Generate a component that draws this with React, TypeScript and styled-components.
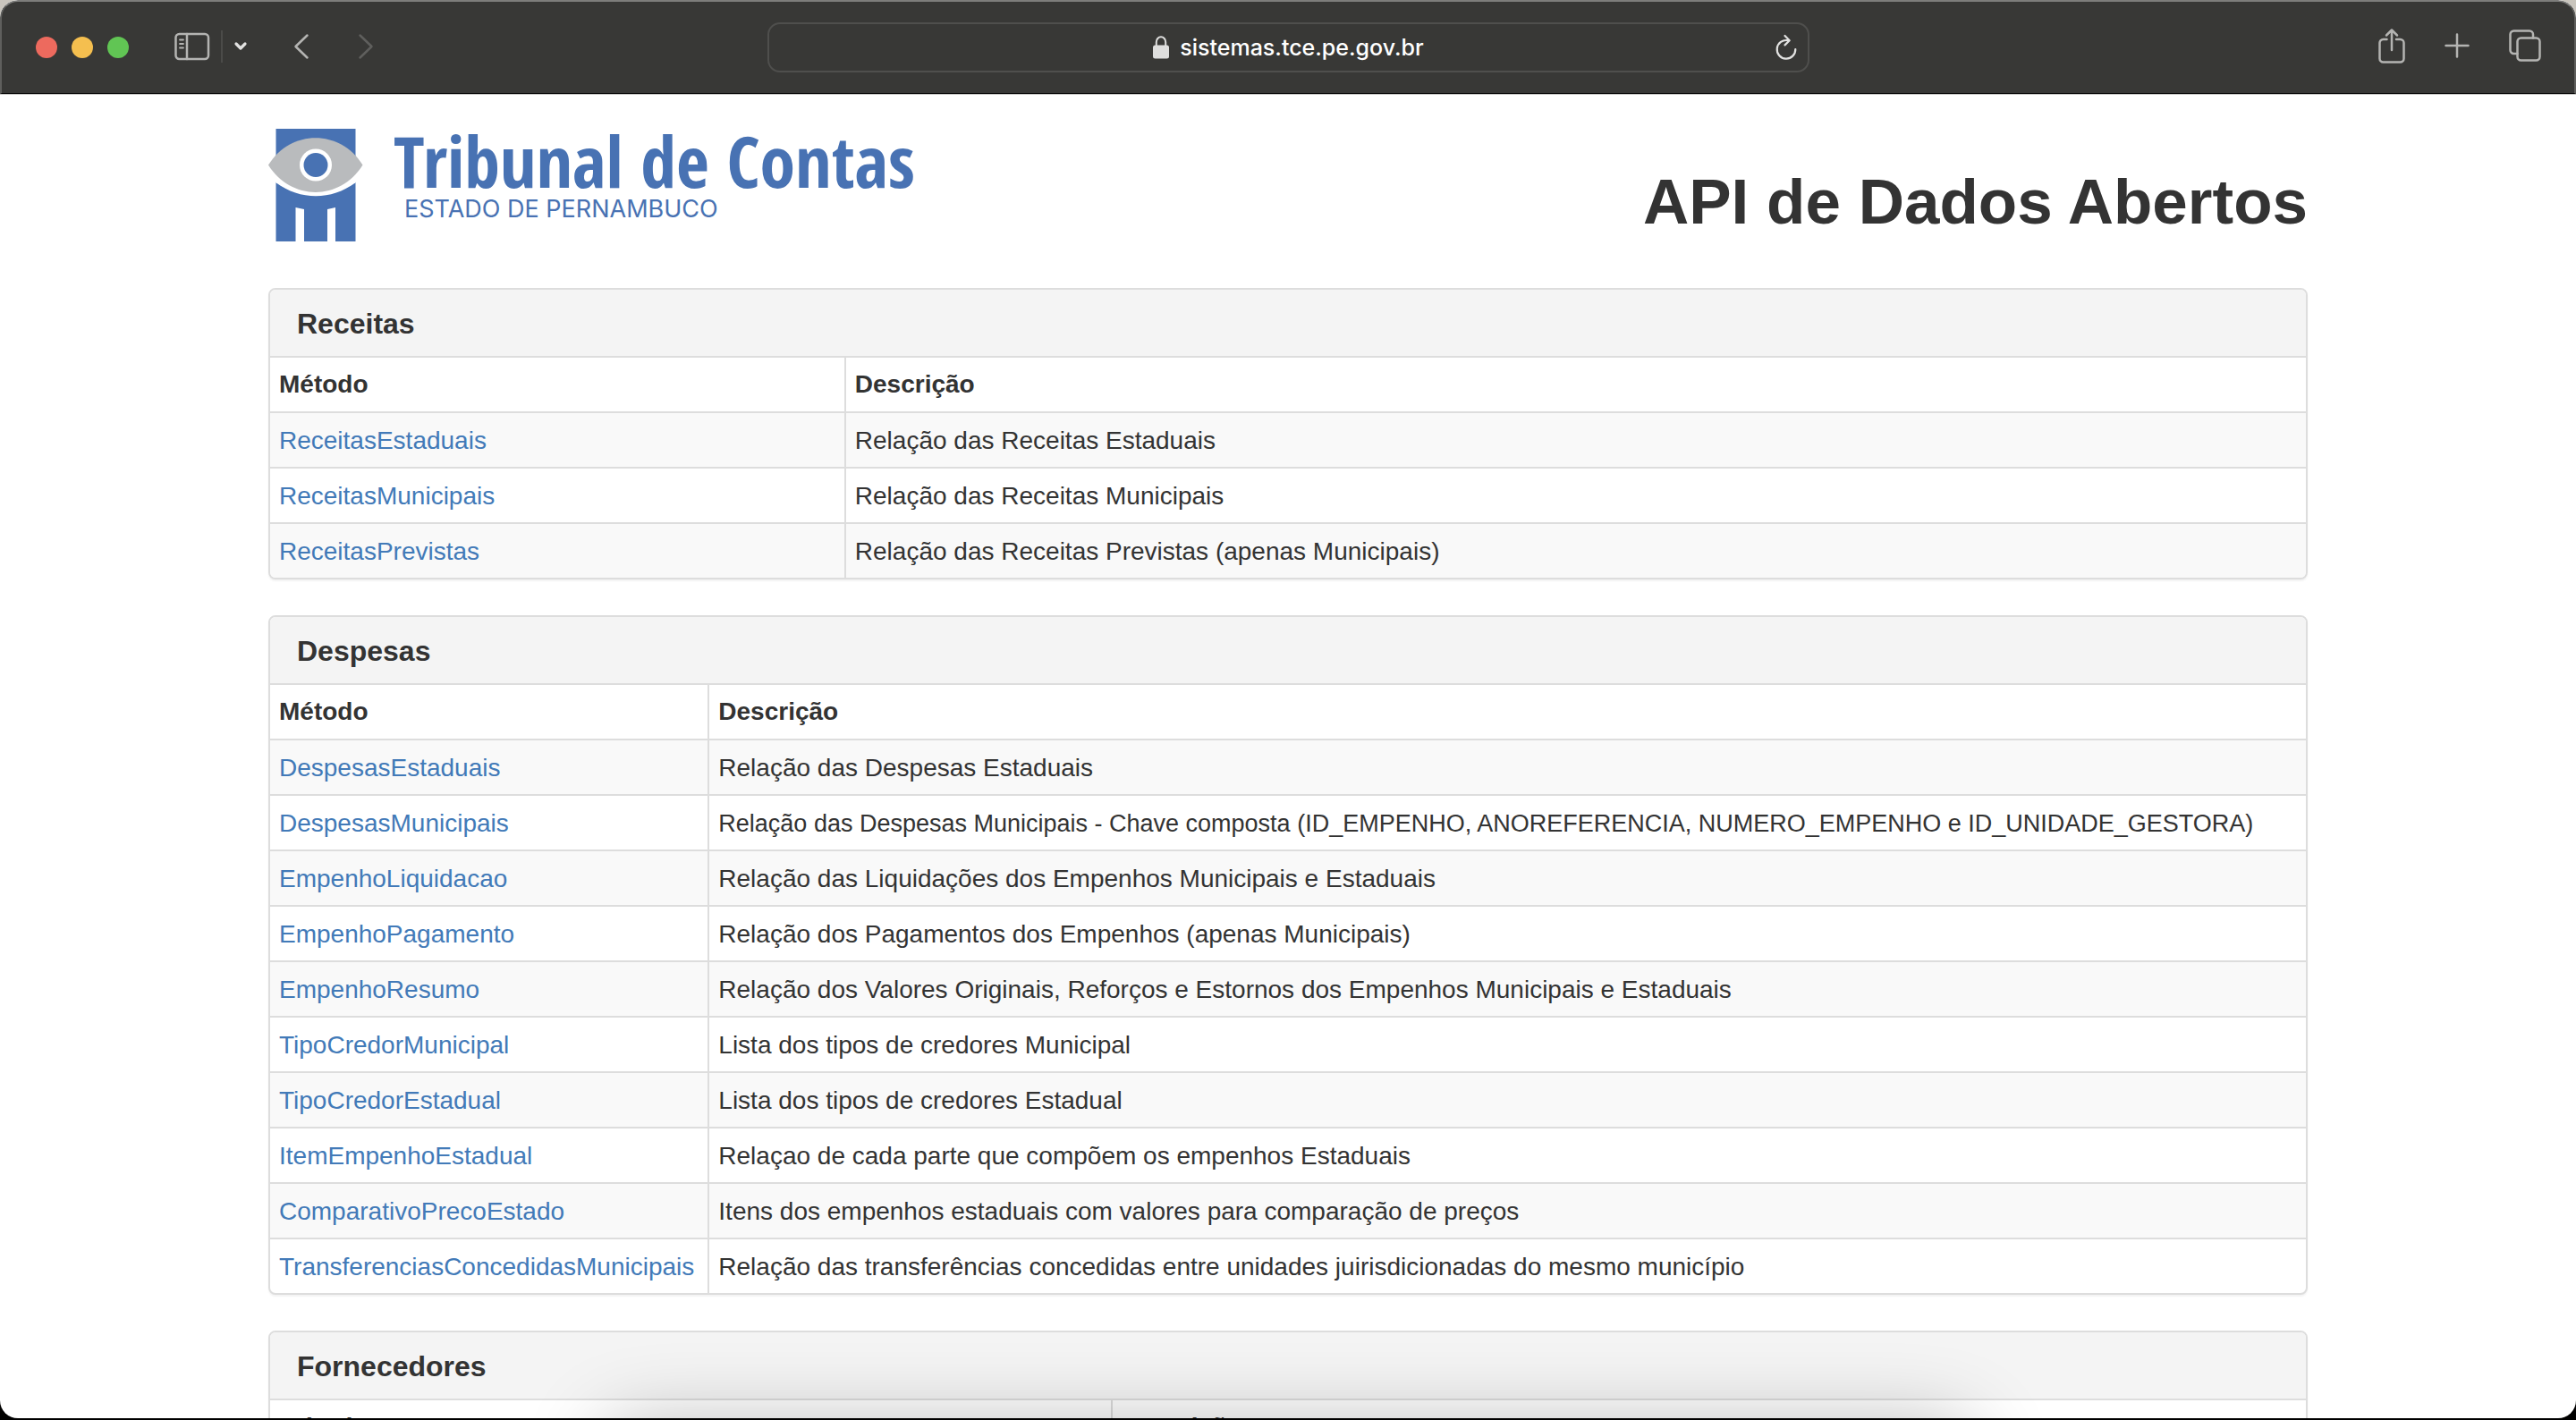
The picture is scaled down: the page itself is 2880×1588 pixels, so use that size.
import React from "react";
import styled, { createGlobalStyle } from "styled-components";

const GlobalStyle = createGlobalStyle`
  *, *::before, *::after { box-sizing: border-box; }
  body { margin: 0; background: #1a1710; }
`;

const sans = `"Liberation Sans", Arial, Helvetica, sans-serif`;

/* ---------- browser window ---------- */

const Desktop = styled.div`
  height: 100vh;
  padding-bottom: 2px;
  background: linear-gradient(#c9c5bd 0, #c9c5bd 60px, #3a3118 70%, #000 100%);
  overflow: hidden;
`;

const BrowserWindow = styled.div`
  position: relative;
  display: flex;
  flex-direction: column;
  height: 100%;
  border-radius: 20px;
  overflow: hidden;
  background: #fff;
`;

const Toolbar = styled.header`
  flex: none;
  display: grid;
  grid-template-columns: 1fr 41.6% 1fr;
  align-items: center;
  height: 105px;
  padding: 0 37px 1px 38px;
  border: 2px solid #5f5f5d;
  border-top-color: #7d7d7b;
  border-bottom: 1px solid #000;
  border-radius: 20px 20px 0 0;
  background: #383836;
  box-shadow: 0 1px 0 #c4c4c2;
`;

const Group = styled.div<{ $gap: number; $end?: boolean }>`
  display: flex;
  align-items: center;
  justify-content: ${(p) => (p.$end ? "flex-end" : "flex-start")};
  gap: ${(p) => p.$gap}px;
`;

const IconGroup = styled(Group)`
  padding-bottom: ${(p) => (p.$end ? 4 : 2)}px;
`;

const LeftTools = styled.div`
  display: flex;
  align-items: center;
  gap: 51px;
`;

const TrafficLight = styled.button<{ $color: string }>`
  width: 24px;
  height: 24px;
  padding: 0;
  border: 0;
  border-radius: 50%;
  background: ${(p) => p.$color};
`;

const ToolButton = styled.button<{ $dim?: boolean; $bright?: boolean }>`
  display: flex;
  padding: 0;
  border: 0;
  background: none;
  color: ${(p) => (p.$dim ? "#5f5f5d" : p.$bright ? "#e2e2e1" : "#b4b4b2")};
  svg {
    display: block;
    fill: none;
    stroke: currentColor;
    stroke-width: 2.5;
    stroke-linecap: round;
    stroke-linejoin: round;
  }
`;

const Divider = styled.span`
  width: 2px;
  height: 36px;
  background: #4b4b49;
`;

const AddressBar = styled.div`
  display: grid;
  grid-template-columns: 1fr auto 1fr;
  align-items: center;
  height: 56px;
  padding: 0 11px;
  border: 2px solid #4f4f4d;
  border-radius: 14px;
`;

const Address = styled.label`
  grid-column: 2;
  display: flex;
  align-items: center;
  gap: 12px;
`;

const AddressInput = styled.input`
  field-sizing: content;
  padding: 0;
  border: 0;
  outline: 0;
  background: none;
  color: #fff;
  font: 500 25px/36px Inter, Roboto, sans-serif;
`;

const Reload = styled(ToolButton)`
  justify-self: end;
`;

/* ---------- page ---------- */

const Page = styled.div`
  flex: 1;
  min-height: 0;
  overflow: hidden;
  padding-top: 39px;
`;

const Container = styled.main`
  width: 100%;
  max-width: 2340px;
  margin: 0 auto;
  padding: 0 30px;
  color: #333;
  font: 28px/40px ${sans};
`;

const PageHeader = styled.div`
  display: flex;
  align-items: flex-end;
  justify-content: space-between;
  margin-bottom: 52px;
`;

const Logo = styled.a`
  display: flex;
  gap: 34px;
  color: #4872b3;
  text-decoration: none;
  svg {
    display: block;
  }
`;

const Wordmark = styled.span`
  display: flex;
  flex-direction: column;
`;

const LogoName = styled.span`
  font: 700 80px/70px "Open Sans Condensed", "Roboto Condensed", sans-serif;
`;

const LogoState = styled.span`
  padding-left: 12px;
  font: 400 27px/40px Inter, Roboto, sans-serif;
`;

const Title = styled.h1`
  margin: 0;
  font-size: 71px;
  line-height: 88px;
  font-weight: 700;
`;

const Panel = styled.section`
  margin-bottom: 40px;
  border: 2px solid #ddd;
  border-radius: 8px;
  overflow: hidden;
  background: #fff;
  box-shadow: 0 2px 2px rgba(0, 0, 0, 0.05);
`;

const PanelTitle = styled.h2`
  margin: 0;
  padding: 21px 30px 19px;
  background: #f4f4f4;
  font-size: 32px;
  line-height: 34px;
  font-weight: 700;
`;

const Table = styled.table`
  width: 100%;
  border-collapse: separate;
  border-spacing: 0;
  table-layout: fixed;

  th,
  td {
    padding: 10px;
    border-top: 2px solid #ddd;
    text-align: left;
    white-space: nowrap;
  }
  td {
    padding: 11px 10px 9px;
  }
  th + th,
  td + td {
    border-left: 2px solid #ddd;
  }
  tbody tr:nth-child(odd) {
    background: #f9f9f9;
  }
`;

const MethodColumn = styled.col<{ $share: number }>`
  width: ${(p) => p.$share}%;
`;

const MethodLink = styled.a`
  color: #427ab8;
  text-decoration: none;
`;

const Description = styled.td<{ $long: boolean }>`
  font-size: ${(p) => (p.$long ? 27 : 28)}px;
`;

/* Shadow cast upwards by the dock that sits under the window. */
const DockShadow = styled.div`
  position: absolute;
  top: 100%;
  left: 23.5%;
  right: 23.5%;
  height: 160px;
  margin-top: 10px;
  border-radius: 30px;
  box-shadow: 0 0 90px rgba(0, 0, 0, 0.3);
  pointer-events: none;
`;

type Row = [method: string, description: string];
type Section = { title: string; share: number; rows: Row[] };

const LONG_DESCRIPTION = 100;

const sections: Section[] = [
  {
    title: "Receitas",
    share: 28.2,
    rows: [
      ["ReceitasEstaduais", "Relação das Receitas Estaduais"],
      ["ReceitasMunicipais", "Relação das Receitas Municipais"],
      ["ReceitasPrevistas", "Relação das Receitas Previstas (apenas Municipais)"],
    ],
  },
  {
    title: "Despesas",
    share: 21.5,
    rows: [
      ["DespesasEstaduais", "Relação das Despesas Estaduais"],
      [
        "DespesasMunicipais",
        "Relação das Despesas Municipais - Chave composta (ID_EMPENHO, ANOREFERENCIA, NUMERO_EMPENHO e ID_UNIDADE_GESTORA)",
      ],
      ["EmpenhoLiquidacao", "Relação das Liquidações dos Empenhos Municipais e Estaduais"],
      ["EmpenhoPagamento", "Relação dos Pagamentos dos Empenhos (apenas Municipais)"],
      ["EmpenhoResumo", "Relação dos Valores Originais, Reforços e Estornos dos Empenhos Municipais e Estaduais"],
      ["TipoCredorMunicipal", "Lista dos tipos de credores Municipal"],
      ["TipoCredorEstadual", "Lista dos tipos de credores Estadual"],
      ["ItemEmpenhoEstadual", "Relaçao de cada parte que compõem os empenhos Estaduais"],
      ["ComparativoPrecoEstado", "Itens dos empenhos estaduais com valores para comparação de preços"],
      [
        "TransferenciasConcedidasMunicipais",
        "Relação das transferências concedidas entre unidades juirisdicionadas do mesmo município",
      ],
    ],
  },
  { title: "Fornecedores", share: 41.3, rows: [] },
];

function Emblem() {
  return (
    <svg width="106" height="126" viewBox="0 0 106 126" aria-hidden="true">
      <path fill="#4872b3" d="M8.500 0h89v126H75V88l-9 2v36H40V90l-9.500-2v38h-22z" />
      <path fill="#fff" d="M8 32 0 50 8.500 60.300C36 80.300 70 80.300 97.500 60.300L106 50 98 32z" />
      <path fill="#b9bbbd" d="M0 40.500C25 0 80.500 0 105.500 40.500 80.500 81 25 81 0 40.500z" />
      <circle cx="53" cy="40.500" r="18" fill="#fff" />
      <circle cx="53" cy="40.500" r="13.500" fill="#4872b3" />
    </svg>
  );
}

function BrowserToolbar() {
  return (
    <Toolbar>
      <LeftTools>
        <Group $gap={16}>
          <TrafficLight $color="#ed6a5e" aria-label="Fechar" />
          <TrafficLight $color="#f5bf4f" aria-label="Minimizar" />
          <TrafficLight $color="#61c554" aria-label="Ampliar" />
        </Group>
        <IconGroup $gap={12}>
          <ToolButton aria-label="Barra lateral">
            <svg width="40" height="32" viewBox="0 0 40 32">
              <rect x="1.500" y="2" width="36.500" height="28" rx="4" />
              <path d="M14 2v28" />
              <path strokeWidth="1.800" d="M6 8.500h4M6 13h4M6 17.500h4" />
            </svg>
          </ToolButton>
          <Divider />
          <ToolButton $bright aria-label="Grupos de abas">
            <svg width="16" height="12" viewBox="0 0 16 12">
              <path strokeWidth="3.200" d="M3 3l5 5 5-5" />
            </svg>
          </ToolButton>
        </IconGroup>
        <IconGroup $gap={54}>
          <ToolButton aria-label="Voltar">
            <svg width="18" height="30" viewBox="0 0 18 30">
              <path d="M15.500 2.500 2.500 15l13 12.500" />
            </svg>
          </ToolButton>
          <ToolButton $dim aria-label="Avançar">
            <svg width="18" height="30" viewBox="0 0 18 30">
              <path d="M2.500 2.500 15.500 15l-13 12.500" />
            </svg>
          </ToolButton>
        </IconGroup>
      </LeftTools>

      <AddressBar>
        <Address>
          <svg width="18" height="26" viewBox="0 0 18 26" aria-hidden="true">
            <rect x="0" y="10.500" width="18" height="15" rx="2.500" fill="#dededd" />
            <path d="M3.800 12V7a5.200 5.700 0 0 1 10.400 0v5" fill="none" stroke="#dededd" strokeWidth="2" />
          </svg>
          <AddressInput aria-label="Endereço" readOnly value="sistemas.tce.pe.gov.br" />
        </Address>
        <Reload $bright aria-label="Recarregar">
          <svg width="26" height="30" viewBox="0 0 26 30">
            <path strokeWidth="2.200" d="M15 7.200A10.300 10.300 0 1 0 23.300 17M11.500 2l5.200 5.200-5.200 5.200" />
          </svg>
        </Reload>
      </AddressBar>

      <IconGroup $gap={44} $end>
        <ToolButton aria-label="Compartilhar">
          <svg width="30" height="40" viewBox="0 0 30 40">
            <path d="M9.500 13H5.500a4 4 0 0 0-4 4v17.500a4 4 0 0 0 4 4h19a4 4 0 0 0 4-4V17a4 4 0 0 0-4-4H20" />
            <path d="M15 25V3M9 8.500 15 2.500l6 6" />
          </svg>
        </ToolButton>
        <ToolButton aria-label="Nova aba">
          <svg width="28" height="28" viewBox="0 0 28 28">
            <path d="M14 1.500v25M1.500 14h25" />
          </svg>
        </ToolButton>
        <ToolButton aria-label="Mostrar abas">
          <svg width="36" height="36" viewBox="0 0 36 36">
            <rect x="9.500" y="9.500" width="25" height="25" rx="4" />
            <path d="M9.500 27H5.500a4 4 0 0 1-4-4V5.500a4 4 0 0 1 4-4H23a4 4 0 0 1 4 4v4" />
          </svg>
        </ToolButton>
      </IconGroup>
    </Toolbar>
  );
}

function MethodPanel({ title, share, rows }: Section) {
  return (
    <Panel>
      <PanelTitle>{title}</PanelTitle>
      <Table>
        <colgroup>
          <MethodColumn $share={share} />
          <col />
        </colgroup>
        <thead>
          <tr>
            <th scope="col">Método</th>
            <th scope="col">Descrição</th>
          </tr>
        </thead>
        <tbody>
          {rows.map(([method, description]) => (
            <tr key={method}>
              <td>
                <MethodLink href={`#${method}`}>{method}</MethodLink>
              </td>
              <Description $long={description.length > LONG_DESCRIPTION}>{description}</Description>
            </tr>
          ))}
        </tbody>
      </Table>
    </Panel>
  );
}

export default function App() {
  return (
    <Desktop>
      <GlobalStyle />
      <BrowserWindow>
        <BrowserToolbar />
        <Page>
          <Container>
            <PageHeader>
              <Logo href="#inicio">
                <Emblem />
                <Wordmark>
                  <LogoName>Tribunal de Contas</LogoName>
                  <LogoState>ESTADO DE PERNAMBUCO</LogoState>
                </Wordmark>
              </Logo>
              <Title>API de Dados Abertos</Title>
            </PageHeader>
            {sections.map((section) => (
              <MethodPanel key={section.title} {...section} />
            ))}
          </Container>
        </Page>
        <DockShadow />
      </BrowserWindow>
    </Desktop>
  );
}
